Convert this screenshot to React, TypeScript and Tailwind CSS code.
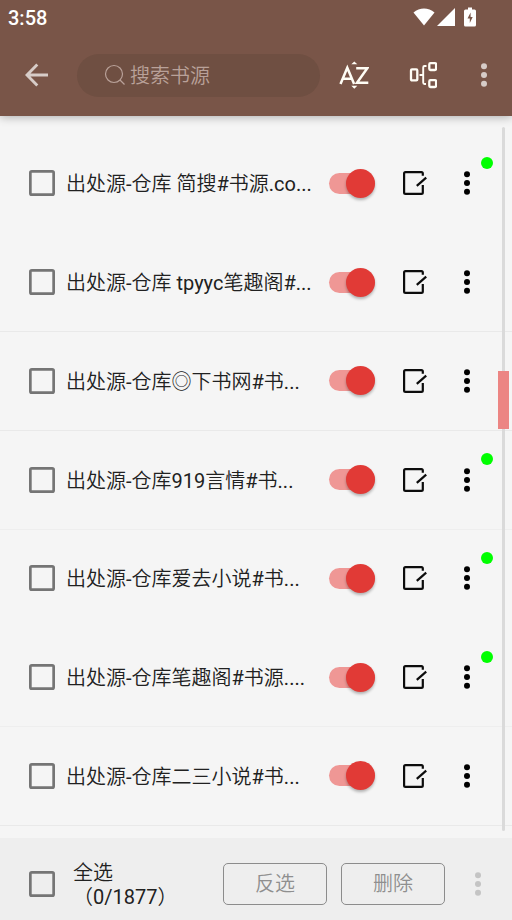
import { useState } from "react";

type Source = {
  name: string;
  explore: boolean;
  line: string;
};

const sources: Source[] = [
  { name: "出处源-仓库 简搜#书源.co...", explore: true, line: "border-transparent" },
  { name: "出处源-仓库 tpyyc笔趣阁#...", explore: false, line: "border-[#e9e9e9]" },
  { name: "出处源-仓库◎下书网#书...", explore: false, line: "border-[#e9e9e9]" },
  { name: "出处源-仓库919言情#书...", explore: true, line: "border-[#eeeeee]" },
  { name: "出处源-仓库爱去小说#书...", explore: true, line: "border-transparent" },
  { name: "出处源-仓库笔趣阁#书源....", explore: true, line: "border-[#eeeeee]" },
  { name: "出处源-仓库二三小说#书...", explore: false, line: "border-[#e9e9e9]" },
];

// Latin runs stay at regular weight, Chinese runs are a step lighter
function MixedText({ text }: { text: string }) {
  return text.split(/([\x20-\x7e]+)/).map((part, i) => (
    <span key={i} className={i % 2 ? "font-normal" : "font-[350]"}>
      {part}
    </span>
  ));
}

function Checkbox() {
  return (
    <svg viewBox="0 0 26 26" className="size-[26px] shrink-0" fill="none" stroke="#757575" strokeWidth="2.700">
      <rect x="1.350" y="1.350" width="23.300" height="23.300" rx="1.500" />
    </svg>
  );
}

function Dots({ className }: { className: string }) {
  return (
    <svg viewBox="0 0 8 24" className={`h-6 w-2 shrink-0 ${className}`} fill="currentColor">
      <circle cx="4" cy="3.3" r="3" />
      <circle cx="4" cy="12" r="3" />
      <circle cx="4" cy="20.7" r="3" />
    </svg>
  );
}

function EditIcon() {
  return (
    <svg viewBox="0 0 24 24" className="size-6 shrink-0" fill="none" stroke="#0c0c0c" strokeWidth="2.200">
      <path d="M19.800 4.800V2.500Q19.800 1.100 18.400 1.100H2.500Q1.100 1.100 1.100 2.500V21.500Q1.100 22.900 2.500 22.900H18.400Q19.800 22.900 19.800 21.500V14" />
      <path d="M13.800 14.800L23.200 6.600" />
    </svg>
  );
}

function Toggle({ on, onClick }: { on: boolean; onClick: () => void }) {
  return (
    <button
      onClick={onClick}
      className={`flex h-[21px] w-[46px] shrink-0 items-center rounded-full ${
        on ? "justify-end bg-[#ef9795]" : "justify-start bg-[#bdbdbd]"
      }`}
    >
      <span
        className={`size-[29px] shrink-0 rounded-full shadow-[0_2px_3px_rgba(0,0,0,0.28)] ${
          on ? "bg-[#e13a36]" : "bg-[#fafafa]"
        }`}
      />
    </button>
  );
}

function StatusBar() {
  return (
    <div className="flex h-9 items-center justify-between pl-2 pr-9">
      <span className="font-[Roboto] text-[20px] font-medium leading-none text-white">3:58</span>
      <div className="flex items-center pb-0.5 text-white">
        <svg viewBox="0 0 22 18" className="h-[18px] w-[22px]" fill="currentColor">
          <path d="M0.500 4.500C6.500-1 15.500-1 21.500 4.500L11 17.500Z" />
        </svg>
        <svg viewBox="0 0 18 18" className="ml-0.5 size-[18px]" fill="currentColor">
          <path d="M18 0V18H0Z" />
        </svg>
        <svg viewBox="0 0 12 20" className="ml-[9.5px] h-5 w-3" fill="currentColor">
          <path d="M4 0.500h4v2h2.500q1.500 0 1.500 1.500v14q0 1.500-1.500 1.500h-9q-1.500 0-1.500-1.500V4q0-1.500 1.500-1.500H4z" />
          <path d="M6.600 5.500L3.500 11.500h2.300v4.500L8.700 10H6.600z" fill="#795548" />
        </svg>
      </div>
    </div>
  );
}

function TitleBar() {
  return (
    <div className="flex h-[78px] items-center pl-[25px] pr-6">
      <svg viewBox="0 0 24 24" className="size-6 text-[#d7ccc8]" fill="none" stroke="currentColor" strokeWidth="2.900">
        <path d="M23 12H2.500M12.300 1.500L2 12L12.300 22.500" />
      </svg>
      <div className="ml-7 flex h-[43px] w-[243px] items-center rounded-full bg-[#6f4f42] pl-[27px] text-[#b9a199]">
        <svg viewBox="0 0 22 22" className="size-[22px]" fill="none" stroke="currentColor" strokeWidth="1.200">
          <circle cx="10" cy="10" r="8.500" />
          <path d="M16 16L20.500 20.500" />
        </svg>
        <span className="ml-1 pt-px text-[20px] font-[350] leading-none">搜索书源</span>
      </div>
      <svg viewBox="0 0 30 30" className="ml-[19px] size-[30px]" fill="none" stroke="#fffdf5" strokeWidth="2.500">
        <path d="M1.500 24L8.300 7.800L15.100 24M3.800 18.700H12.800" />
        <path d="M17.200 8.200H28.300L18 22.700H29.300" />
        <path d="M12.300 4.300L15.300 1.500L18.300 4.300ZM12.300 25.800L15.300 28.700L18.300 25.800Z" fill="#fffdf5" stroke="none" />
      </svg>
      <svg viewBox="0 0 28 28" className="ml-10 size-7" fill="none" stroke="#fffdf5" strokeWidth="2.300">
        <rect x="2" y="8.400" width="6.300" height="11" rx="1" />
        <path d="M10.500 14H14M17.500 5H15.500Q14.200 5 14.200 6.500V21.500Q14.200 23 15.500 23H17" strokeWidth="1.900" />
        <rect x="20.300" y="2.200" width="6.800" height="6.800" rx="1.200" />
        <rect x="20.300" y="19.200" width="6.800" height="6.800" rx="1.200" />
      </svg>
      <Dots className="ml-auto text-[#d7ccc8]" />
    </div>
  );
}

export default function App() {
  const [enabled, setEnabled] = useState(sources.map(() => true));

  const toggle = (index: number) => {
    setEnabled(enabled.map((on, i) => (i === index ? !on : on)));
  };

  return (
    <div className="flex h-[920px] w-[512px] flex-col overflow-hidden bg-[#f5f5f5] font-[Roboto,'Noto_Sans_CJK_SC',sans-serif] text-[#212121]">
      <header className="z-10 h-[115.5px] shrink-0 bg-[#795548] shadow-[0_1px_9px_rgba(0,0,0,0.3)]">
        <StatusBar />
        <TitleBar />
      </header>

      <main className="relative h-[722.5px] shrink-0 pt-[19px]">
        {sources.map((source, index) => (
          <div
            key={source.name}
            className={`relative flex h-[98.78px] items-center border-b pl-[29px] ${source.line}`}
          >
            <Checkbox />
            <span className="ml-[11px] w-[263px] truncate pt-0.5 text-[20px]">
              <MixedText text={source.name} />
            </span>
            <Toggle on={enabled[index]} onClick={() => toggle(index)} />
            <span className="ml-7 flex">
              <EditIcon />
            </span>
            <Dots className="ml-9 text-black" />
            {/* explore marker */}
            {source.explore && (
              <span className="absolute right-[19px] top-[22.5px] size-3 rounded-full bg-[#00ff00]" />
            )}
          </div>
        ))}

        {/* fast scroll track and handle */}
        <div className="absolute right-[7px] top-[11px] h-[704px] w-[3px] rounded-full bg-[#dadada]" />
        <div className="absolute right-[3px] top-[255.5px] h-[58px] w-[11px] bg-[#ec8583]" />
      </main>

      <footer className="flex flex-1 items-center bg-[#eeeeee] pl-[29px] pr-[30px] pt-[9px]">
        <Checkbox />
        <div className="ml-[18px] w-[150px] pt-1 text-[20px] leading-[23.500px]">
          <p>
            <MixedText text="全选" />
          </p>
          <p>
            <MixedText text="（0/1877）" />
          </p>
        </div>
        <button className="h-[42px] w-[104px] rounded-[5px] border-[1.5px] border-[#8c8c8c] pt-px text-[20px] font-[350] text-[#8f8f8f]">
          反选
        </button>
        <button className="ml-3.5 h-[42px] w-[104px] rounded-[5px] border-[1.5px] border-[#8c8c8c] pt-px text-[20px] font-[350] text-[#8f8f8f]">
          删除
        </button>
        <Dots className="ml-auto text-[#c4c4c4]" />
      </footer>
    </div>
  );
}
